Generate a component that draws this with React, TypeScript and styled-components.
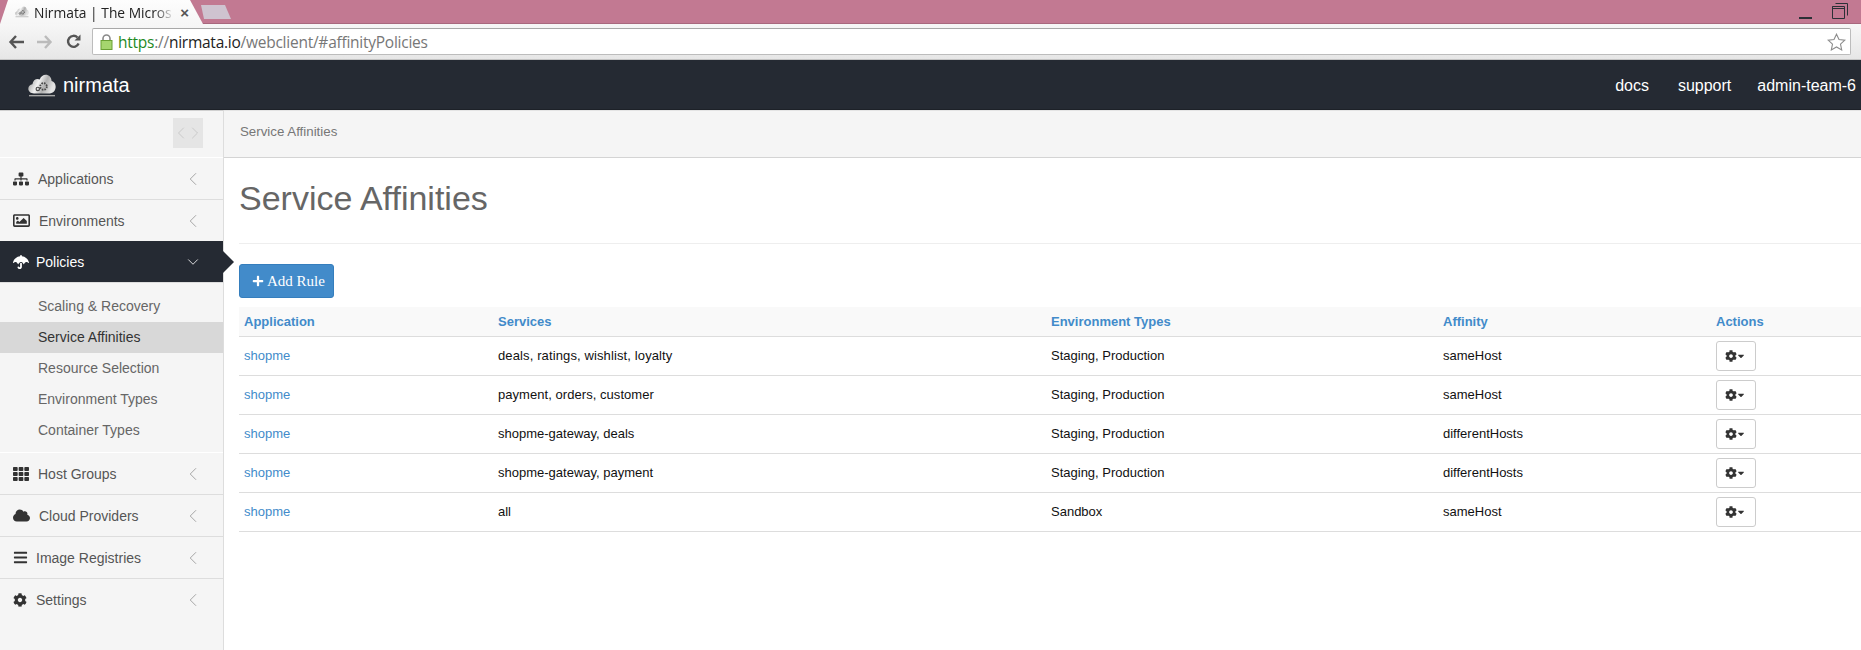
import styled, { createGlobalStyle } from "styled-components";
import { ChevronDown, ChevronLeft, ChevronRight } from "lucide-react";
import {
  FaBars,
  FaCaretDown,
  FaCloud,
  FaCog,
  FaPlus,
  FaRegImage,
  FaSitemap,
  FaTh,
  FaUmbrella,
} from "react-icons/fa";
import type { ReactNode } from "react";

const GlobalStyle = createGlobalStyle`
  html, body {
    margin: 0;
    padding: 0;
    height: 650px;
    overflow: hidden;
    background: #fff;
    font-family: "Liberation Sans", Arial, sans-serif;
  }
  * { box-sizing: border-box; }
`;

// 기본 데이터
const rules = [
  { services: "deals, ratings, wishlist, loyalty", spacing: 0.12, env: "Staging, Production", affinity: "sameHost" },
  { services: "payment, orders, customer", spacing: 0.05, env: "Staging, Production", affinity: "sameHost" },
  { services: "shopme-gateway, deals", spacing: 0, env: "Staging, Production", affinity: "differentHosts" },
  { services: "shopme-gateway, payment", spacing: 0, env: "Staging, Production", affinity: "differentHosts" },
  { services: "all", spacing: 0, env: "Sandbox", affinity: "sameHost" },
];

const subItems = [
  "Scaling & Recovery",
  "Service Affinities",
  "Resource Selection",
  "Environment Types",
  "Container Types",
];

function CloudLogo({ size }: { size: number }) {
  return (
    <svg width={size} height={size * 0.82} viewBox="0 0 28 23">
      <defs>
        <linearGradient id={`metal${size}`} x1="0" y1="0" x2="1" y2="0.3">
          <stop offset="0" stopColor="#8d8d8d" />
          <stop offset="0.45" stopColor="#f2f2f2" />
          <stop offset="0.7" stopColor="#b0b0b0" />
          <stop offset="1" stopColor="#e4e4e4" />
        </linearGradient>
      </defs>
      <path
        d="M6 19.5C2.5 19.5 0.3 17.4 0.3 14.8 0.3 12.4 2 10.6 4.4 10.3 5 6.9 7 5 9.6 5c.8 0 1.5.2 2.1.5C13 2.3 15.2.8 17.6.8c3.5 0 5.900 2.700 6 6.300 2.500.7 4.100 3 4.100 5.800 0 3.700-2.500 6.600-6 6.600z"
        fill={`url(#metal${size})`}
      />
      <circle cx="15.5" cy="12.5" r="3.3" fill="none" stroke="#4a4a4a" strokeWidth="1.8" strokeDasharray="1.6 1" />
      <circle cx="9.8" cy="15" r="1.7" fill="none" stroke="#4a4a4a" strokeWidth="1.2" />
      <rect x="1" y="21" width="26" height="1.4" fill="#a8a8a8" />
    </svg>
  );
}

function NavItem({
  icon,
  label,
  gap,
  active,
  last,
}: {
  icon: ReactNode;
  label: string;
  gap: number;
  active?: boolean;
  last?: boolean;
}) {
  return (
    <NavRow $active={active} $last={last}>
      <NavIcon $active={active}>{icon}</NavIcon>
      <NavLabel $gap={gap}>{label}</NavLabel>
      <NavChevron $active={active}>
        {active ? <ChevronDown size={18} strokeWidth={1.1} /> : <ChevronLeft size={22} strokeWidth={0.8} />}
      </NavChevron>
      {active ? <ActiveTip /> : null}
    </NavRow>
  );
}

function App() {
  return (
    <>
      <GlobalStyle />
      <TabStrip>
        <Tab>
          <CloudLogo size={14} />
          <TabTitle>Nirmata | The Micros</TabTitle>
          <TabClose>×</TabClose>
        </Tab>
        <NewTab />
        <WindowButtons>
          <Minimize />
          <svg width="16" height="16" viewBox="0 0 16 16">
            <path d="M3.5.5h12v12M.5 3.5h12v12H.5zM.5 3.5v2h12" fill="none" stroke="#2b3036" />
          </svg>
        </WindowButtons>
      </TabStrip>
      <Toolbar>
        <BrowserButtons>
          <svg width="16" height="14" viewBox="0 0 16 14">
            <path d="M8 1 2.5 7 8 13M3 7h13" fill="none" stroke="#555" strokeWidth="2.4" />
          </svg>
          <svg width="16" height="14" viewBox="0 0 16 14">
            <path d="M8 1l5.500 6L8 13M13 7H0" fill="none" stroke="#bbb" strokeWidth="2.4" />
          </svg>
          <svg width="15" height="15" viewBox="0 0 15 15">
            <path d="M12.6 9.500A5.500 5.500 0 1 1 11.500 3.500" fill="none" stroke="#555" strokeWidth="2.4" />
            <path d="M8.500 6.500h6v-6z" fill="#555" />
          </svg>
        </BrowserButtons>
        <UrlBox>
          <svg width="13" height="16" viewBox="0 0 13 16">
            <path d="M3 7V4.500a3.500 3.500 0 0 1 7 0V7" fill="none" stroke="#8a8a8a" strokeWidth="1.6" />
            <rect x="1" y="6.500" width="11" height="9" fill="#a5d66e" stroke="#6aa034" />
          </svg>
          <UrlText>
            <UrlScheme>https</UrlScheme>
            <UrlMuted>://</UrlMuted>
            <UrlHost>nirmata.io</UrlHost>
            <UrlMuted>/webclient/#affinityPolicies</UrlMuted>
          </UrlText>
          <StarSlot>
            <svg width="19" height="18" viewBox="0 0 19 18">
              <path
                d="M9.500 1.200l2.500 5.300 5.800.7-4.300 4 1.200 5.700-5.200-2.900-5.200 2.900 1.200-5.700-4.300-4 5.800-.7z"
                fill="#fff"
                stroke="#8c8c8c"
                strokeWidth="1.100"
              />
            </svg>
          </StarSlot>
        </UrlBox>
      </Toolbar>
      <Header>
        <Brand>
          <CloudLogo size={28} />
          <BrandName>nirmata</BrandName>
        </Brand>
        <HeaderNav>
          <HeaderLink $extra={3}>docs</HeaderLink>
          <HeaderLink>support</HeaderLink>
          <HeaderLink>admin-team-6</HeaderLink>
        </HeaderNav>
      </Header>
      <Body>
        <Sidebar>
          <CollapseRow>
            <CollapseBox>
              <ChevronLeft size={20} strokeWidth={0.8} />
              <ChevronRight size={20} strokeWidth={0.8} />
            </CollapseBox>
          </CollapseRow>
          <NavItem icon={<FaSitemap size={16} />} label="Applications" gap={9} />
          <NavItem icon={<FaRegImage size={17} />} label="Environments" gap={9} />
          <NavItem icon={<FaUmbrella size={16} />} label="Policies" gap={7} active />
          <SubMenu>
            {subItems.map((item) => (
              <SubItem key={item} $selected={item === "Service Affinities"}>
                {item}
              </SubItem>
            ))}
          </SubMenu>
          <NavItem icon={<FaTh size={16} />} label="Host Groups" gap={9} />
          <NavItem icon={<FaCloud size={17} />} label="Cloud Providers" gap={9} />
          <NavItem icon={<FaBars size={15} />} label="Image Registries" gap={8} />
          <NavItem icon={<FaCog size={14} />} label="Settings" gap={9} last />
        </Sidebar>
        <Main>
          <Breadcrumb>Service Affinities</Breadcrumb>
          <Content>
            <PageTitle>Service Affinities</PageTitle>
            <AddButton>
              <FaPlus size={12} />
              Add Rule
            </AddButton>
            <RulesTable>
              <colgroup>
                <col style={{ width: 254 }} />
                <col style={{ width: 553 }} />
                <col style={{ width: 392 }} />
                <col style={{ width: 273 }} />
                <col />
              </colgroup>
              <thead>
                <tr>
                  <HeadCell>Application</HeadCell>
                  <HeadCell>Services</HeadCell>
                  <HeadCell>Environment Types</HeadCell>
                  <HeadCell>Affinity</HeadCell>
                  <HeadCell>Actions</HeadCell>
                </tr>
              </thead>
              <tbody>
                {rules.map((rule) => (
                  <tr key={rule.services}>
                    <Cell>
                      <AppLink>shopme</AppLink>
                    </Cell>
                    <Cell>
                      <ServiceList $spacing={rule.spacing}>{rule.services}</ServiceList>
                    </Cell>
                    <Cell>{rule.env}</Cell>
                    <Cell>{rule.affinity}</Cell>
                    <Cell>
                      <ActionButton>
                        <FaCog size={12} />
                        <FaCaretDown size={10} />
                      </ActionButton>
                    </Cell>
                  </tr>
                ))}
              </tbody>
            </RulesTable>
          </Content>
        </Main>
      </Body>
    </>
  );
}

const TabStrip = styled.div`
  position: relative;
  display: flex;
  align-items: flex-end;
  height: 24px;
  background: #c27992;
  border-bottom: 1px solid #a8687e;
`;
const Tab = styled.div`
  display: flex;
  align-items: center;
  gap: 5px;
  width: 203px;
  height: 24px;
  margin-bottom: -1px;
  padding: 0 14px 0 15px;
  background: linear-gradient(#fdfdfd, #f6f6f6);
  clip-path: polygon(0 100%, 8px 0, 190px 0, 203px 100%);
`;
const TabTitle = styled.span`
  flex: 1;
  white-space: nowrap;
  font: 13.800px "Open Sans", sans-serif;
  color: #222;
  mask-image: linear-gradient(to right, #000 85%, transparent);
`;
const TabClose = styled.span`
  font: bold 15px "Liberation Sans", sans-serif;
  color: #555;
`;
const NewTab = styled.div`
  width: 30px;
  height: 14px;
  margin: 0 0 4px -2px;
  background: #cfc3d0;
  clip-path: polygon(3px 100%, 0 0, 24px 0, 30px 100%);
`;
const WindowButtons = styled.div`
  display: flex;
  align-items: center;
  gap: 20px;
  position: absolute;
  top: 3px;
  right: 13px;
`;
const Minimize = styled.div`
  width: 13px;
  height: 2px;
  margin-top: 13px;
  background: #2b3036;
`;
const Toolbar = styled.div`
  display: flex;
  align-items: center;
  height: 36px;
  padding: 0 10px 0 0;
  background: linear-gradient(#f7f7f7, #e6e6e6);
  border-bottom: 1px solid #c4c4c4;
`;
const BrowserButtons = styled.div`
  display: flex;
  align-items: center;
  gap: 13px;
  width: 92px;
  padding-left: 8px;
`;
const UrlBox = styled.div`
  display: flex;
  align-items: center;
  flex: 1;
  height: 27px;
  padding: 0 4px 0 7px;
  background: #fff;
  border: 1px solid #bcbcbc;
  border-top-color: #a8a8a8;
  border-radius: 2px;
`;
const UrlText = styled.div`
  flex: 1;
  margin-left: 5px;
  font: 15.500px "Open Sans", sans-serif;
  letter-spacing: -0.25px;
  white-space: nowrap;
`;
const UrlScheme = styled.span`
  color: #1f8a1f;
`;
const UrlMuted = styled.span`
  color: #777;
`;
const UrlHost = styled.span`
  color: #222;
`;
const StarSlot = styled.div`
  display: flex;
`;
const Header = styled.header`
  display: flex;
  align-items: center;
  justify-content: space-between;
  height: 50px;
  padding: 2px 5px 0 28px;
  background: #252a33;
  border-bottom: 1px solid #1d2128;
`;
const Brand = styled.div`
  display: flex;
  align-items: center;
  gap: 7px;
`;
const BrandName = styled.span`
  font-size: 20px;
  color: #fff;
`;
const HeaderNav = styled.nav`
  display: flex;
  gap: 26px;
`;
const HeaderLink = styled.a<{ $extra?: number }>`
  margin-right: ${(props) => props.$extra ?? 0}px;
  font-size: 16px;
  color: #fff;
`;
const Body = styled.div`
  display: flex;
  height: 540px;
`;
const Sidebar = styled.aside`
  flex: 0 0 224px;
  background: #f5f5f5;
  border-right: 1px solid #ddd;
  border-top: 1px solid #d0d0d0;
`;
const CollapseRow = styled.div`
  display: flex;
  justify-content: flex-end;
  height: 47px;
  padding: 7px 20px 0 0;
  border-bottom: 1px solid #fff;
`;
const CollapseBox = styled.div`
  display: flex;
  align-items: center;
  justify-content: center;
  width: 30px;
  height: 30px;
  color: #bbb;
  background: #e5e5e5;
  svg {
    flex: none;
    margin: 0 -3px;
  }
`;
const NavRow = styled.div<{ $active?: boolean; $last?: boolean }>`
  position: relative;
  display: flex;
  align-items: center;
  height: 42px;
  margin-top: ${(props) => (props.$active ? "-1px" : "0")};
  padding: 0 ${(props) => (props.$active ? "21px" : "19px")} 0 13px;
  color: ${(props) => (props.$active ? "#fff" : "#555")};
  background: ${(props) => (props.$active ? "#252a33" : "transparent")};
  border-bottom: 1px solid ${(props) => (props.$last ? "transparent" : "#ddd")};
`;
const NavIcon = styled.span<{ $active?: boolean }>`
  display: flex;
  color: ${(props) => (props.$active ? "#fff" : "#333")};
`;
const NavLabel = styled.span<{ $gap: number }>`
  flex: 1;
  margin-left: ${(props) => props.$gap}px;
  font-size: 14px;
`;
const NavChevron = styled.span<{ $active?: boolean }>`
  display: flex;
  color: ${(props) => (props.$active ? "#fff" : "#888")};
`;
const ActiveTip = styled.span`
  position: absolute;
  top: 10px;
  right: -11px;
  width: 0;
  height: 0;
  border-top: 11px solid transparent;
  border-bottom: 11px solid transparent;
  border-left: 11px solid #252a33;
`;
const SubMenu = styled.div`
  display: flex;
  flex-direction: column;
  padding: 8px 0 6px;
  border-bottom: 1px solid #fff;
`;
const SubItem = styled.a<{ $selected?: boolean }>`
  display: flex;
  align-items: center;
  height: 31px;
  padding: 0 0 2px 38px;
  font-size: 14px;
  color: ${(props) => (props.$selected ? "#333" : "#666")};
  background: ${(props) => (props.$selected ? "#d8d8d8" : "transparent")};
`;
const Main = styled.main`
  flex: 1;
  min-width: 0;
`;
const Breadcrumb = styled.div`
  display: flex;
  align-items: center;
  height: 48px;
  padding: 0 0 6px 16px;
  font-size: 13.300px;
  color: #777;
  background: #f5f5f5;
  border-bottom: 1px solid #d4d4d4;
  border-top: 1px solid #e4e4e4;
`;
const Content = styled.div`
  padding: 0 0 0 15px;
`;
const PageTitle = styled.h1`
  height: 86px;
  margin: 0 0 20px;
  padding-top: 21px;
  font-size: 34px;
  font-weight: 400;
  color: #666;
  border-bottom: 1px solid #eee;
`;
const AddButton = styled.button`
  display: flex;
  align-items: center;
  gap: 3px;
  width: 95px;
  height: 34px;
  padding: 0 0 0 12px;
  font: 15px "Liberation Serif", serif;
  color: #fff;
  background: #428bca;
  border: 1px solid #357ebd;
  border-radius: 3px;
`;
const RulesTable = styled.table`
  width: 100%;
  margin-top: 9px;
  border-collapse: collapse;
  table-layout: fixed;
`;
const HeadCell = styled.th`
  height: 29px;
  padding: 0 5px;
  font-size: 13px;
  text-align: left;
  color: #428bca;
  background: #f9f9f9;
  border-bottom: 1px solid #ddd;
`;
const Cell = styled.td`
  height: 39px;
  padding: 0 5px;
  font-size: 13px;
  color: #111;
  border-bottom: 1px solid #ddd;
`;
const ServiceList = styled.span<{ $spacing: number }>`
  letter-spacing: ${(props) => props.$spacing}px;
`;
const AppLink = styled.a`
  color: #428bca;
`;
const ActionButton = styled.button`
  display: flex;
  align-items: center;
  justify-content: center;
  width: 40px;
  height: 30px;
  padding: 0 2px 0 0;
  color: #333;
  background: #fff;
  border: 1px solid #ccc;
  border-radius: 3px;
  svg + svg {
    margin-left: -1px;
  }
`;

export default App;
